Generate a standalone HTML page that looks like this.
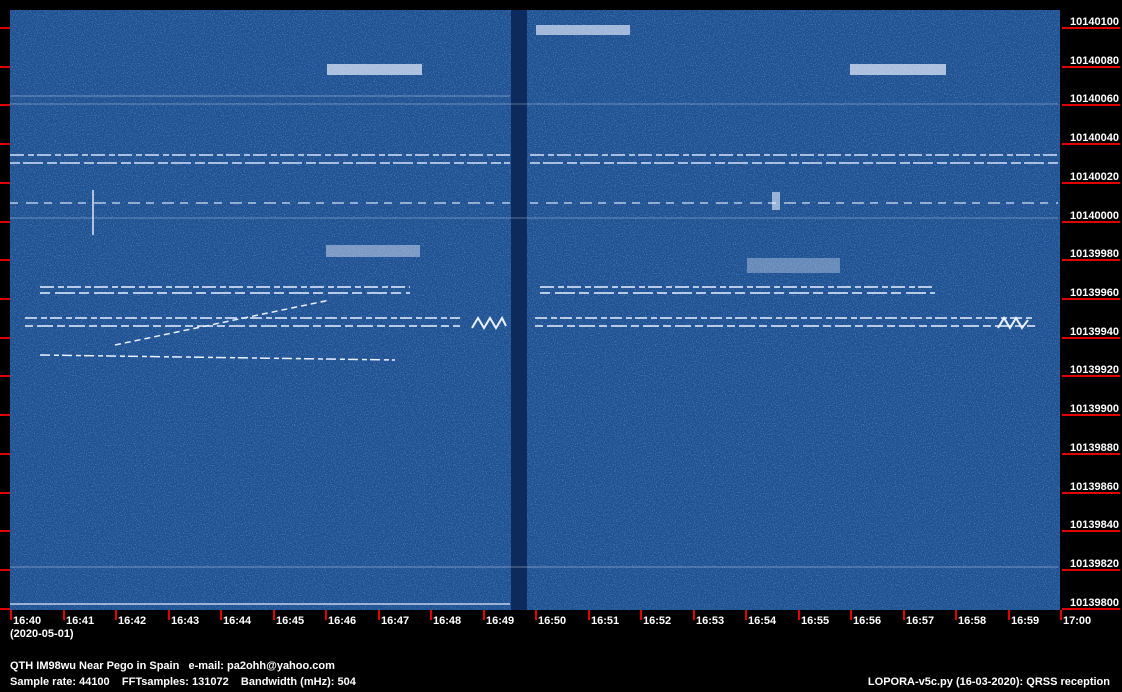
<!DOCTYPE html>
<html><head><meta charset="utf-8"><style>
html,body{margin:0;padding:0;background:#000;}
svg{display:block}
text{font-family:"Liberation Sans",sans-serif;font-weight:bold;fill:#fff;font-size:11px}
</style></head><body>
<svg width="1122" height="692" xmlns="http://www.w3.org/2000/svg">
<defs>
<filter id="n" x="0" y="0" width="100%" height="100%">
<feTurbulence type="fractalNoise" baseFrequency="0.9" numOctaves="2" seed="3"/>
<feColorMatrix type="matrix" values="0 0 0 0 0.45  0 0 0 0 0.7  0 0 0 0 1  0 0 0 2.2 -1.1"/>
</filter>
</defs>
<rect width="1122" height="692" fill="#000"/>
<rect x="10" y="10" width="1050" height="600" fill="#1f5192"/>
<rect x="10" y="10" width="1050" height="600" filter="url(#n)" opacity="0.5"/>
<rect x="511" y="10" width="16" height="600" fill="#0c2b5c"/>
<g stroke="#e8f0ff" fill="none">
<line x1="10" y1="96" x2="510" y2="96" stroke-width="1" opacity="0.4"/>
<line x1="10" y1="104" x2="1058" y2="104" stroke-width="1" opacity="0.35"/>
<line x1="10" y1="155" x2="510" y2="155" stroke-width="1.5" stroke-dasharray="14 4 6 3" opacity="0.9"/>
<line x1="530" y1="155" x2="1058" y2="155" stroke-width="1.5" stroke-dasharray="14 4 6 3" opacity="0.9"/>
<line x1="10" y1="163" x2="510" y2="163" stroke-width="1.5" stroke-dasharray="10 3 20 4" opacity="0.9"/>
<line x1="530" y1="163" x2="1058" y2="163" stroke-width="1.5" stroke-dasharray="10 3 20 4" opacity="0.9"/>
<line x1="10" y1="203" x2="510" y2="203" stroke-width="1.5" stroke-dasharray="8 8 12 6" opacity="0.75"/>
<line x1="530" y1="203" x2="1058" y2="203" stroke-width="1.5" stroke-dasharray="8 8 12 6" opacity="0.75"/>
<line x1="10" y1="218" x2="1058" y2="218" stroke-width="1" opacity="0.35"/>
<line x1="40" y1="287" x2="410" y2="287" stroke-width="1.5" stroke-dasharray="14 4 6 3"/>
<line x1="40" y1="293" x2="410" y2="293" stroke-width="1.5" stroke-dasharray="10 5 20 4"/>
<line x1="540" y1="287" x2="935" y2="287" stroke-width="1.5" stroke-dasharray="14 4 6 3"/>
<line x1="540" y1="293" x2="935" y2="293" stroke-width="1.5" stroke-dasharray="10 5 20 4"/>
<line x1="25" y1="318" x2="460" y2="318" stroke-width="1.5" stroke-dasharray="12 4 6 3"/>
<line x1="25" y1="326" x2="460" y2="326" stroke-width="1.5" stroke-dasharray="8 4 16 4"/>
<line x1="535" y1="318" x2="1035" y2="318" stroke-width="1.5" stroke-dasharray="12 4 6 3"/>
<line x1="535" y1="326" x2="1035" y2="326" stroke-width="1.5" stroke-dasharray="8 4 16 4"/>
<polyline points="472,328 478,318 484,328 490,318 496,328 502,318 506,326" stroke-width="2"/>
<polyline points="998,328 1004,318 1010,328 1016,318 1022,328 1028,320" stroke-width="2"/>
<line x1="115" y1="345" x2="330" y2="300" stroke-width="1.5" stroke-dasharray="6 4"/>
<line x1="40" y1="355" x2="395" y2="360" stroke-width="1.5" stroke-dasharray="10 4 5 3"/>
<line x1="10" y1="567" x2="1058" y2="567" stroke-width="1" opacity="0.4"/>
<line x1="10" y1="604" x2="510" y2="604" stroke-width="2" opacity="0.6"/>
<line x1="93" y1="190" x2="93" y2="235" stroke-width="2" opacity="0.7"/>
</g>
<g fill="#e8f0ff">
<rect x="327" y="64" width="95" height="11" opacity="0.7"/>
<rect x="850" y="64" width="96" height="11" opacity="0.7"/>
<rect x="536" y="25" width="94" height="10" opacity="0.65"/>
<rect x="326" y="245" width="94" height="12" opacity="0.45"/>
<rect x="747" y="258" width="93" height="15" opacity="0.35"/>
<rect x="772" y="192" width="8" height="18" opacity="0.6"/>
</g>
<g fill="#e00000">
<rect x="0" y="27" width="10" height="2"/><rect x="1062" y="27" width="58" height="2"/>
<rect x="0" y="66" width="10" height="2"/><rect x="1062" y="66" width="58" height="2"/>
<rect x="0" y="104" width="10" height="2"/><rect x="1062" y="104" width="58" height="2"/>
<rect x="0" y="143" width="10" height="2"/><rect x="1062" y="143" width="58" height="2"/>
<rect x="0" y="182" width="10" height="2"/><rect x="1062" y="182" width="58" height="2"/>
<rect x="0" y="221" width="10" height="2"/><rect x="1062" y="221" width="58" height="2"/>
<rect x="0" y="259" width="10" height="2"/><rect x="1062" y="259" width="58" height="2"/>
<rect x="0" y="298" width="10" height="2"/><rect x="1062" y="298" width="58" height="2"/>
<rect x="0" y="337" width="10" height="2"/><rect x="1062" y="337" width="58" height="2"/>
<rect x="0" y="375" width="10" height="2"/><rect x="1062" y="375" width="58" height="2"/>
<rect x="0" y="414" width="10" height="2"/><rect x="1062" y="414" width="58" height="2"/>
<rect x="0" y="453" width="10" height="2"/><rect x="1062" y="453" width="58" height="2"/>
<rect x="0" y="492" width="10" height="2"/><rect x="1062" y="492" width="58" height="2"/>
<rect x="0" y="530" width="10" height="2"/><rect x="1062" y="530" width="58" height="2"/>
<rect x="0" y="569" width="10" height="2"/><rect x="1062" y="569" width="58" height="2"/>
<rect x="0" y="608" width="10" height="2"/><rect x="1062" y="608" width="58" height="2"/>
</g>
<g text-anchor="end">
<text x="1119" y="25">10140100</text><text x="1119" y="64">10140080</text>
<text x="1119" y="102">10140060</text><text x="1119" y="141">10140040</text>
<text x="1119" y="180">10140020</text><text x="1119" y="219">10140000</text>
<text x="1119" y="257">10139980</text><text x="1119" y="296">10139960</text>
<text x="1119" y="335">10139940</text><text x="1119" y="373">10139920</text>
<text x="1119" y="412">10139900</text><text x="1119" y="451">10139880</text>
<text x="1119" y="490">10139860</text><text x="1119" y="528">10139840</text>
<text x="1119" y="567">10139820</text><text x="1119" y="606">10139800</text>
</g>
<g fill="#e00000">
<rect x="10" y="610" width="2" height="10"/><rect x="63" y="610" width="2" height="10"/>
<rect x="115" y="610" width="2" height="10"/><rect x="168" y="610" width="2" height="10"/>
<rect x="220" y="610" width="2" height="10"/><rect x="273" y="610" width="2" height="10"/>
<rect x="325" y="610" width="2" height="10"/><rect x="378" y="610" width="2" height="10"/>
<rect x="430" y="610" width="2" height="10"/><rect x="483" y="610" width="2" height="10"/>
<rect x="535" y="610" width="2" height="10"/><rect x="588" y="610" width="2" height="10"/>
<rect x="640" y="610" width="2" height="10"/><rect x="693" y="610" width="2" height="10"/>
<rect x="745" y="610" width="2" height="10"/><rect x="798" y="610" width="2" height="10"/>
<rect x="850" y="610" width="2" height="10"/><rect x="903" y="610" width="2" height="10"/>
<rect x="955" y="610" width="2" height="10"/><rect x="1008" y="610" width="2" height="10"/>
<rect x="1060" y="610" width="2" height="10"/>
</g>
<g>
<text x="13" y="624">16:40</text><text x="66" y="624">16:41</text>
<text x="118" y="624">16:42</text><text x="171" y="624">16:43</text>
<text x="223" y="624">16:44</text><text x="276" y="624">16:45</text>
<text x="328" y="624">16:46</text><text x="381" y="624">16:47</text>
<text x="433" y="624">16:48</text><text x="486" y="624">16:49</text>
<text x="538" y="624">16:50</text><text x="591" y="624">16:51</text>
<text x="643" y="624">16:52</text><text x="696" y="624">16:53</text>
<text x="748" y="624">16:54</text><text x="801" y="624">16:55</text>
<text x="853" y="624">16:56</text><text x="906" y="624">16:57</text>
<text x="958" y="624">16:58</text><text x="1011" y="624">16:59</text>
<text x="1063" y="624">17:00</text>
<text x="10" y="637">(2020-05-01)</text>
<text x="10" y="669" xml:space="preserve">QTH IM98wu Near Pego in Spain   e-mail: pa2ohh@yahoo.com</text>
<text x="10" y="685" xml:space="preserve">Sample rate: 44100    FFTsamples: 131072    Bandwidth (mHz): 504</text>
<text x="1110" y="685" text-anchor="end">LOPORA-v5c.py (16-03-2020): QRSS reception</text>
</g>
</svg>
</body></html>
